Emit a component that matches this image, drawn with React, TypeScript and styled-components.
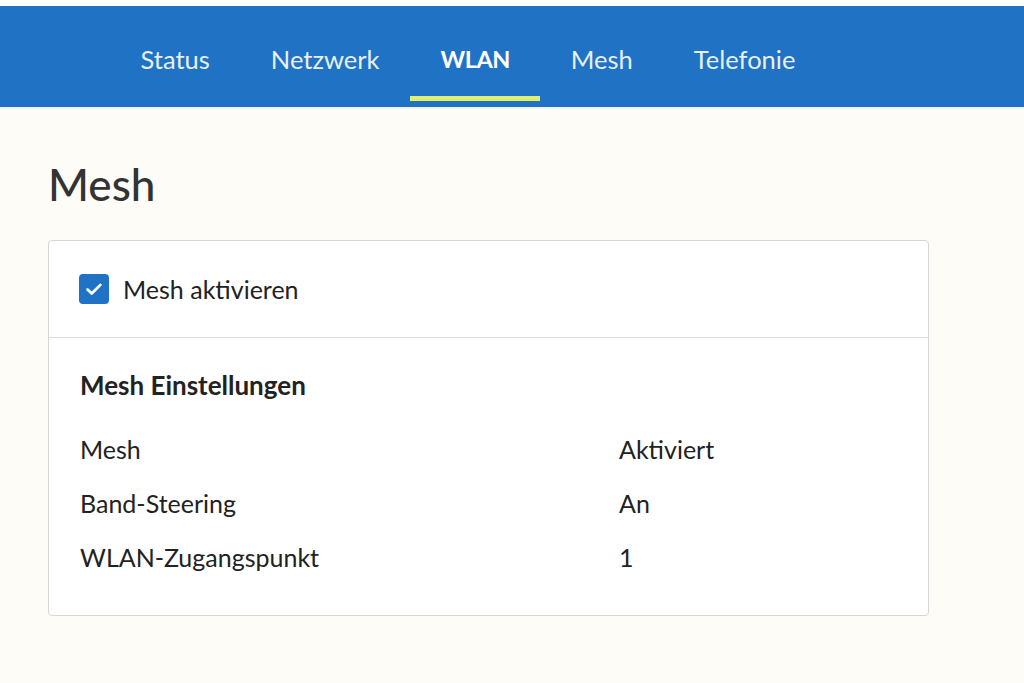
import React from "react";
import styled, { createGlobalStyle } from "styled-components";

const Global = createGlobalStyle`
  html, body { margin: 0; padding: 0; background: #fdfcf7; }
  body { font-family: Lato, "Noto Sans", sans-serif; color: #2a2a2a; }
  * { box-sizing: border-box; }
`;

const Page = styled.div`
  min-height: 683px;
  background: #fdfcf7;
  padding-top: 6px;
  background-image: linear-gradient(#ffffff, #ffffff);
  background-size: 100% 6px;
  background-repeat: no-repeat;
`;

const Header = styled.header`
  height: 101px;
  background: #1f72c4;
  display: flex;
  align-items: stretch;
  padding-left: 110px;
  box-shadow: 0 1px 2px rgba(0,0,0,0.08);
`;

const NavItem = styled.a<{ $active?: boolean }>`
  position: relative;
  display: flex;
  align-items: center;
  padding: 0 30.5px;
  margin-top: 4px;
  font-size: ${(p) => (p.$active ? "23.5px" : "25.5px")};
  letter-spacing: ${(p) => (p.$active ? "-0.5px" : "0")};
  font-weight: ${(p) => (p.$active ? 700 : 400)};
  color: ${(p) => (p.$active ? "#ffffff" : "#e8f0fa")};
  text-decoration: none;
  &::after {
    content: "";
    display: ${(p) => (p.$active ? "block" : "none")};
    position: absolute;
    left: 0;
    right: 0;
    bottom: 6px;
    height: 5px;
    background: #e2ef6c;
  }
`;

const Main = styled.main`
  padding: 50px 95px 0 48px;
`;

const Title = styled.h1`
  margin: 0 0 29px 0;
  font-size: 44px;
  font-weight: 500;
  color: #333;
  line-height: 54px;
`;

const Card = styled.section`
  width: 881px;
  border: 1px solid #d6d6d6;
  border-radius: 4px;
  background: #ffffff;
`;

const CheckRow = styled.label`
  display: flex;
  align-items: center;
  gap: 14px;
  height: 97px;
  padding: 0 30px;
  border-bottom: 1px solid #dcdcdc;
  font-size: 25px;
  color: #222;
`;

const Box = styled.span`
  width: 30px;
  height: 30px;
  border-radius: 4px;
  background: #1f72c4;
  display: flex;
  align-items: center;
  justify-content: center;
`;

const Body = styled.div`
  padding: 30px 31px 31px;
`;

const SubTitle = styled.h2`
  margin: 0 0 20px 0;
  font-size: 26px;
  font-weight: 700;
  color: #222;
  line-height: 34px;
`;

const Row = styled.div`
  display: grid;
  grid-template-columns: 539px 1fr;
  height: 54px;
  align-items: center;
  font-size: 25px;
  color: #222;
`;

const rows = [
  ["Mesh", "Aktiviert"],
  ["Band-Steering", "An"],
  ["WLAN-Zugangspunkt", "1"],
];

export default function App() {
  return (
    <Page>
      <Global />
      <Header>
        <NavItem>Status</NavItem>
        <NavItem>Netzwerk</NavItem>
        <NavItem $active>WLAN</NavItem>
        <NavItem>Mesh</NavItem>
        <NavItem>Telefonie</NavItem>
      </Header>
      <Main>
        <Title>Mesh</Title>
        <Card>
          <CheckRow>
            <Box>
              <svg width="22" height="22" viewBox="0 0 24 24" fill="none" stroke="#fff" strokeWidth="3" strokeLinecap="round" strokeLinejoin="round">
                <path d="M5 12.5l4.5 4.5L19 7.5" />
              </svg>
            </Box>
            Mesh aktivieren
          </CheckRow>
          <Body>
            <SubTitle>Mesh Einstellungen</SubTitle>
            {rows.map(([k, v]) => (
              <Row key={k}>
                <span>{k}</span>
                <span>{v}</span>
              </Row>
            ))}
          </Body>
        </Card>
      </Main>
    </Page>
  );
}
